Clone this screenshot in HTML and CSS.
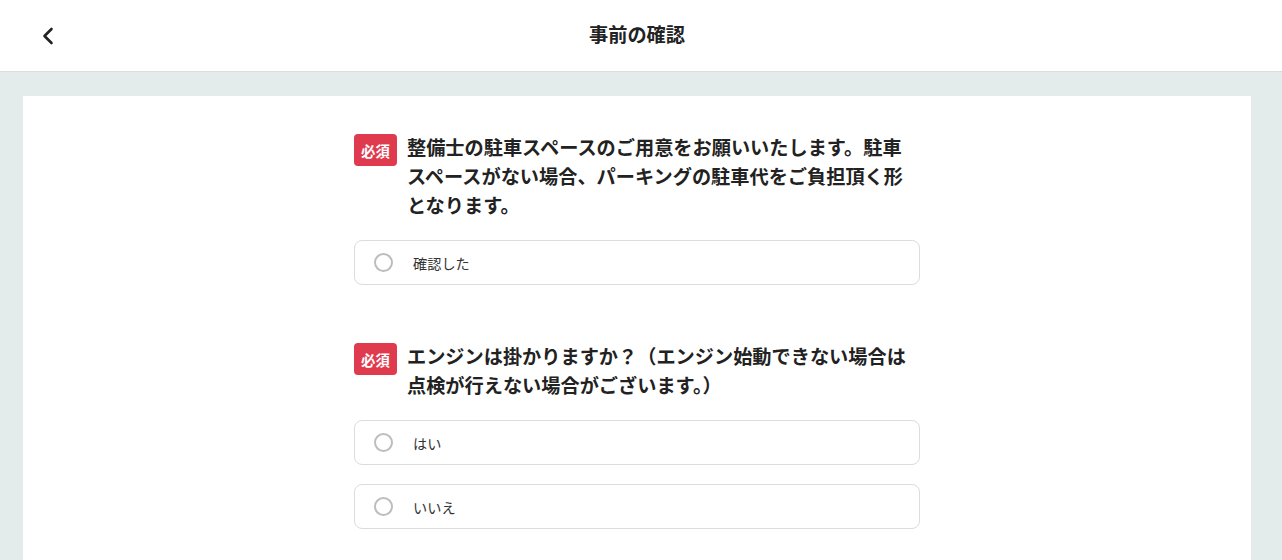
FILE: index.html
```html
<!DOCTYPE html>
<html lang="ja">
<head>
<meta charset="utf-8">
<title>事前の確認</title>
<link rel="stylesheet" href="styles.css">
</head>
<body>
<header class="header">
  <button class="back" aria-label="戻る">
    <svg width="24" height="24" viewBox="0 0 24 24"><polyline points="15.5,5 8.5,12 15.5,19" fill="none" stroke="#222" stroke-width="2.6" stroke-linecap="round" stroke-linejoin="round"/></svg>
  </button>
  <h1 class="title">事前の確認</h1>
</header>
<main class="main">
  <section class="card">
    <div class="form">
      <div class="question">
        <div class="q-head">
          <span class="badge">必須</span>
          <p class="q-text">整備士の駐車スペースのご用意をお願いいたします。駐車スペースがない場合、パーキングの駐車代をご負担頂く形となります。</p>
        </div>
        <label class="option"><span class="radio"></span><span class="label">確認した</span></label>
      </div>
      <div class="question">
        <div class="q-head">
          <span class="badge">必須</span>
          <p class="q-text">エンジンは掛かりますか？（エンジン始動できない場合は点検が行えない場合がございます。）</p>
        </div>
        <label class="option"><span class="radio"></span><span class="label">はい</span></label>
        <label class="option"><span class="radio"></span><span class="label">いいえ</span></label>
      </div>
    </div>
  </section>
</main>
</body>
</html>
```

FILE: styles.css
```css
* { box-sizing: border-box; }
html, body { margin: 0; padding: 0; }
body {
  font-family: "Noto Sans CJK JP", "Noto Sans", sans-serif;
  color: #222;
  background: #e3ecea;
  height: 560px;
  overflow: hidden;
}
.header {
  height: 72px;
  background: #fff;
  border-bottom: 1px solid #dcdcdc;
  display: flex;
  align-items: center;
  justify-content: center;
  padding-right: 8px;
  position: relative;
}
.back {
  position: absolute;
  left: 36px;
  top: 24px;
  width: 24px;
  height: 24px;
  padding: 0;
  border: 0;
  background: none;
  display: flex;
}
.title {
  margin: 0;
  font-size: 19.2px;
  font-weight: 700;
  line-height: 1;
  color: #222;
  padding-bottom: 1px;
}
.main {
  padding: 24px 31px 0 23px;
}
.card {
  background: #fff;
  min-height: 480px;
  padding-top: 37px;
  display: flex;
  justify-content: center;
}
.form {
  width: 566px;
}
.question {
  display: flex;
  flex-direction: column;
  gap: 19px;
  margin-bottom: 57px;
}
.q-head {
  display: flex;
  align-items: flex-start;
  gap: 10px;
  margin-bottom: 1px;
}
.badge {
  flex: none;
  margin-top: 1px;
  width: 43px;
  height: 32px;
  border-radius: 4px;
  background: #e03a4e;
  color: #fff;
  font-size: 14.4px;
  font-weight: 700;
  display: flex;
  align-items: center;
  justify-content: center;
}
.q-text {
  margin: 0;
  font-size: 19.2px;
  font-weight: 700;
  line-height: 29px;
  color: #222;
}
.option {
  height: 45px;
  border: 1px solid #dcdcdc;
  border-radius: 8px;
  display: flex;
  align-items: center;
  padding-left: 19px;
  gap: 20px;
}
.radio {
  width: 19px;
  height: 19px;
  border: 2px solid #bdbdbd;
  border-radius: 50%;
  flex: none;
}
.label {
  font-size: 14.2px;
  color: #333;
}
```
